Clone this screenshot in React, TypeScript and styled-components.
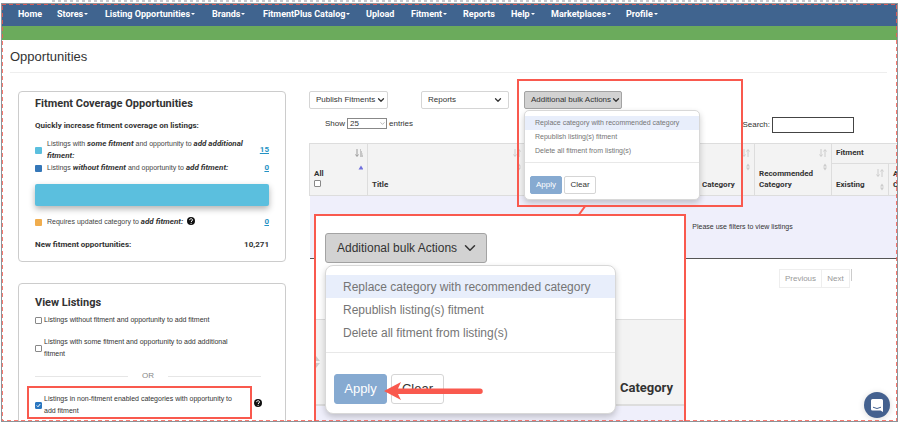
import React from "react";
import styled, { createGlobalStyle, css } from "styled-components";
import { ChevronDown } from "lucide-react";

const RED = "#f9594e";
const BOLD_FONT = `Roboto, "Liberation Sans", Arial, sans-serif`;

const Global = createGlobalStyle`
  * { box-sizing: border-box; }
  html, body { margin: 0; background: #fff; }
  body { font-family: "Liberation Sans", Arial, sans-serif; font-size: 8px; line-height: 12px; color: #333; overflow: hidden; }
  button, input, select { font: inherit; color: inherit; }
  b, th, h2 { font-family: ${BOLD_FONT}; }
`;

const Page = styled.div`
  position: relative;
  height: 100vh;
  padding: 3px 2px 2px 1px;
`;
const DotRule = styled.svg`
  position: absolute;
  top: 0;
  left: 52px;
  width: calc(100% - 94px);
  height: 2px;
`;
const Frame = styled.div`
  position: relative;
  height: 100%;
  border: 1px solid #8d9499;
  overflow: hidden;
`;
const DashedEdge = styled.svg`
  position: absolute;
  inset: 0;
  width: 100%;
  height: 100%;
  pointer-events: none;
  z-index: 5;
  opacity: 0.8;
`;

const Nav = styled.nav`
  display: flex;
  align-items: center;
  height: 22px;
  padding: 0 16px 3px;
  background: #40648f;
`;
const NavLink = styled.a<{ $w: number }>`
  flex: none;
  width: ${(p) => p.$w}px;
  color: #fff;
  font-family: ${BOLD_FONT};
  font-size: 9px;
  font-weight: bold;
  text-decoration: none;
  white-space: nowrap;
`;
const Caret = styled.span`
  display: inline-block;
  margin-left: 1px;
  vertical-align: middle;
  border-top: 2px solid #fff;
  border-left: 2px solid transparent;
  border-right: 2px solid transparent;
`;
const GreenBar = styled.div`
  height: 14px;
  background: #6bab5c;
`;
const TitleBar = styled.header`
  margin: 0 10px 0 8px;
  padding: 8px 0 6px;
  border-bottom: 1px solid #eee;
`;
const PageTitle = styled.h1`
  margin: 0;
  font-size: 13px;
  line-height: 18px;
  font-weight: normal;
`;
const Columns = styled.div`
  display: grid;
  grid-template-columns: 268px minmax(0, 1fr);
  column-gap: 23px;
  padding: 18px 0 0 16px;
`;
const Sidebar = styled.aside`
  display: flex;
  flex-direction: column;
  gap: 21px;
`;
const Card = styled.section<{ $top: number }>`
  padding: ${(p) => p.$top}px 16px 10px;
  border: 1px solid #ccc;
  border-radius: 4px;
`;
const CardTitle = styled.h2`
  margin: 0;
  font-size: 11px;
  line-height: 16px;
`;
const Lead = styled.p`
  margin: 8px 0 6px;
  font-family: ${BOLD_FONT};
  font-weight: bold;
`;
const StatRow = styled.div`
  display: grid;
  grid-template-columns: 7px minmax(0, 1fr) auto;
  column-gap: 5px;
  align-items: center;
  white-space: nowrap;
  font-size: 7px;
  color: #444;
  b { color: #333; font-size: 8px; line-height: 8px; }
`;
const Swatch = styled.span<{ $c: string }>`
  width: 7px;
  height: 7px;
  border-radius: 1px;
  background: ${(p) => p.$c};
`;
const CountLink = styled.a`
  color: #2492c4;
  font-family: ${BOLD_FONT};
  font-size: 8px;
  font-weight: bold;
`;
const CoverageBar = styled.div`
  height: 22px;
  margin: 10px 0;
  border-radius: 2px;
  background: #5bbfde;
  box-shadow: 0 3px 6px rgba(0, 0, 0, 0.3);
`;
const Total = styled.div`
  display: flex;
  justify-content: space-between;
  margin-top: 11px;
  font-family: ${BOLD_FONT};
  font-weight: bold;
`;
const HelpIcon = styled.svg`
  width: 8px;
  height: 8px;
  vertical-align: -1px;
`;
const CheckRow = styled.label`
  display: grid;
  grid-template-columns: 7px 1fr;
  column-gap: 2px;
  align-items: center;
  font-size: 7px;
  white-space: nowrap;
`;
const Tick = styled.input`
  appearance: none;
  width: 7px;
  height: 7px;
  margin: 0;
  border: 1px solid #888;
  border-radius: 1px;
  background: #fff;
  &:checked {
    border-color: #2b77c0;
    background: #2b77c0 url("data:image/svg+xml,%3Csvg xmlns='http://www.w3.org/2000/svg' viewBox='0 0 10 10'%3E%3Cpath d='M1.5 5l2.500 2.500L8.500 2' fill='none' stroke='white' stroke-width='2'/%3E%3C/svg%3E") center / 100%;
  }
`;
const Options = styled.div`
  display: flex;
  flex-direction: column;
  gap: 10px;
  margin-top: 3px;
`;
const OrRule = styled.div`
  display: flex;
  align-items: center;
  gap: 14px;
  margin-right: 8px;
  color: #888;
  &::before, &::after { content: ""; flex: 1; height: 1px; background: #e6e6e6; }
`;
const MarkedRow = styled.div`
  display: flex;
  align-items: center;
  gap: 2px;
  margin: -6px 0 0 -8px;
`;
const MarkedBox = styled.div`
  width: 225px;
  padding: 5px 6px 0;
  border: 2px solid ${RED};
`;

const Main = styled.main`
  min-width: 0;
`;
const Toolbar = styled.div`
  display: flex;
`;
const DropButton = styled.button<{ $w: number; $gap?: number; $end?: number; $active?: boolean; $large?: boolean }>`
  display: flex;
  align-items: center;
  justify-content: space-between;
  width: ${(p) => p.$w}px;
  height: 18px;
  margin-right: ${(p) => p.$gap ?? 0}px;
  padding: 0 ${(p) => p.$end ?? 1}px 0 6px;
  border: 1px solid #d5d5d5;
  border-radius: 2px;
  background: #fff;
  white-space: nowrap;
  svg { flex: none; }
  ${(p) => p.$active && css`
    border-color: #a3a3a3;
    background: #d2d2d2;
  `}
  ${(p) => p.$large && css`
    height: 30px;
    padding: 0 7px 0 11px;
    font-size: 12px;
    border-radius: 3px;
  `}
`;
const BulkActions = styled.div`
  position: relative;
`;
const Menu = styled.div<{ $large?: boolean }>`
  position: absolute;
  z-index: 1;
  top: 100%;
  left: 0;
  width: ${(p) => (p.$large ? 291 : 176)}px;
  margin-top: ${(p) => (p.$large ? 2 : 1)}px;
  padding: ${(p) => (p.$large ? "9px 0" : "5px 0")};
  border: 1px solid #d8d8d8;
  border-radius: ${(p) => (p.$large ? 8 : 5)}px;
  background: #fff;
  box-shadow: 0 3px 6px rgba(0, 0, 0, 0.2);
  font-size: ${(p) => (p.$large ? 12 : 7)}px;
`;
const MenuItem = styled.button<{ $large?: boolean; $on?: boolean }>`
  display: block;
  width: 100%;
  height: ${(p) => (p.$large ? 23 : 14)}px;
  padding: 0 ${(p) => (p.$large ? 17 : 10)}px;
  border: 0;
  background: ${(p) => (p.$on ? "#e8eefb" : "transparent")};
  color: #757575;
  text-align: left;
  white-space: nowrap;
`;
const MenuFooter = styled.div<{ $large?: boolean }>`
  display: flex;
  gap: ${(p) => (p.$large ? 4 : 2)}px;
  margin-top: ${(p) => (p.$large ? 8 : 4)}px;
  padding: ${(p) => (p.$large ? "21px 8px 0" : "13px 5px 0")};
  border-top: 1px solid #e8e8e8;
`;
const MenuButton = styled.button<{ $large?: boolean; $primary?: boolean }>`
  width: ${(p) => (p.$large ? 53 : 32)}px;
  height: ${(p) => (p.$large ? 30 : 18)}px;
  padding: 0;
  border: 1px solid ${(p) => (p.$primary ? "#86aad1" : "#d5d5d5")};
  border-radius: ${(p) => (p.$large ? 3 : 2)}px;
  background: ${(p) => (p.$primary ? "#86aad1" : "#fff")};
  color: ${(p) => (p.$primary ? "#fff" : "#333")};
  font-size: ${(p) => (p.$large ? 13 : 8)}px;
`;
const TableControls = styled.div`
  display: flex;
  align-items: center;
  justify-content: space-between;
  margin: 8px 43px 10px 16px;
`;
const LengthLabel = styled.label`
  display: flex;
  align-items: center;
  gap: 2px;
  padding-bottom: 3px;
`;
const SelectWrap = styled.span`
  position: relative;
  display: flex;
  svg { position: absolute; right: 1px; top: 2px; color: #888; pointer-events: none; }
`;
const LengthSelect = styled.select`
  appearance: none;
  width: 40px;
  height: 11px;
  padding: 0 2px;
  border: 1px solid #888;
  border-radius: 0;
  background: #fff;
  line-height: 9px;
`;
const SearchLabel = styled.label`
  display: flex;
  align-items: center;
  gap: 2px;
`;
const SearchInput = styled.input`
  width: 82px;
  height: 16px;
  border: 1px solid #444;
`;
const Listings = styled.table`
  width: 866px;
  table-layout: fixed;
  border-collapse: collapse;
  border-bottom: 1px solid #555;
`;
const Th = styled.th`
  position: relative;
  height: 20px;
  padding: 2px 4px 5px;
  border: 1px solid #ddd;
  background: #f3f3f3;
  line-height: 11px;
  text-align: left;
  vertical-align: bottom;
`;
const HeadRow = styled.tr<{ $h: number }>`
  height: ${(p) => p.$h}px;
`;
const SortMark = styled.svg`
  position: absolute;
  top: 5px;
  right: 4px;
  width: 8px;
  height: 22px;
`;
const Empty = styled.td`
  height: 63px;
  padding: 0;
  background: #efeffb;
  color: #333;
  font-size: 7px;
  text-align: center;
`;
const Pager = styled.div`
  display: flex;
  justify-content: flex-end;
  margin: 10px 45px 0 0;
`;
const PageButton = styled.button<{ $w: number }>`
  width: ${(p) => p.$w}px;
  height: 19px;
  margin-left: -1px;
  padding: 0;
  border: 1px solid #eee;
  background: #fff;
  color: #999;
`;
const PagerEdge = styled.span`
  width: 1px;
  height: 12px;
  margin-left: 1px;
  background: #ccc;
`;

const Callout = styled.div`
  position: absolute;
  z-index: 2;
  left: 515px;
  top: 75px;
  width: 226px;
  height: 128px;
  border: 2px solid ${RED};
  pointer-events: none;
`;
const Connector = styled.svg`
  position: absolute;
  z-index: 2;
  left: 570px;
  top: 201px;
  width: 20px;
  height: 12px;
`;
const Inset = styled.div`
  position: absolute;
  z-index: 3;
  left: 312px;
  top: 210px;
  bottom: 0;
  width: 372px;
  padding: 17px 0 0 9px;
  border: 2px solid ${RED};
  border-bottom: 0;
  background: #fff;
  overflow: hidden;
`;
const InsetHead = styled.div`
  position: absolute;
  left: 0;
  right: 0;
  top: 103px;
  bottom: 0;
  background: #efeffb;
`;
const InsetHeadCell = styled.div`
  height: 87px;
  padding: 59px 11px 0 0;
  border: solid #ddd;
  border-width: 1px 0 2px;
  background: #f3f3f3;
  font-family: ${BOLD_FONT};
  font-size: 13px;
  line-height: 18px;
  font-weight: bold;
  text-align: right;
`;
const InsetSort = styled.svg`
  position: absolute;
  left: 0;
  top: 36px;
  width: 5px;
  height: 14px;
`;
const Arrow = styled.svg`
  position: absolute;
  z-index: 2;
  left: 67px;
  top: 164px;
  width: 102px;
  height: 22px;
`;
const Chat = styled.button`
  position: absolute;
  z-index: 4;
  right: 7px;
  bottom: 3px;
  display: grid;
  place-items: center;
  width: 26px;
  height: 26px;
  padding: 0;
  border: 0;
  border-radius: 50%;
  background: #44618f;
  box-shadow: 0 1px 6px rgba(0, 0, 0, 0.15);
`;

const NAV: [string, number, boolean][] = [
  ["Home", 39, false], ["Stores", 48, true], ["Listing Opportunities", 107, true], ["Brands", 51, true],
  ["FitmentPlus Catalog", 103, true], ["Upload", 45, false], ["Fitment", 52, true], ["Reports", 48, false],
  ["Help", 40, true], ["Marketplaces", 75, true], ["Profile", 40, true],
];

const Help = () => (
  <HelpIcon viewBox="0 0 16 16" aria-label="Help">
    <circle cx="8" cy="8" r="8" fill="#111" />
    <path d="M5.200 6.200c0-3.700 5.800-3.700 5.800-.2 0 2-2.800 2-2.800 4" fill="none" stroke="#fff" strokeWidth="2" />
    <circle cx="8.200" cy="12.500" r="1.200" fill="#fff" />
  </HelpIcon>
);

const Sort = ({ first = false }: { first?: boolean }) => (
  <SortMark viewBox="0 0 8 22" fill="none" stroke={first ? "#999" : "#ccc"}>
    <path d="M2 0v7M0.500 5.500L2 7.500l1.500-2" />
    {first ? <path d="M5 1h1M5 3h2M5 5h2.500M5 7h3" /> : <path d="M6 8V1M4.500 2.500L6 .5l1.500 2" />}
    {first ? (
      <path d="M3.500 20.500h5l-2.500-4z" fill="#7070dd" stroke="none" />
    ) : (
      <path d="M4 17.500h4l-2-3zM4 18.500h4l-2 3z" fill="#ccc" stroke="none" />
    )}
  </SortMark>
);

const BulkMenu = ({ large = false }: { large?: boolean }) => (
  <BulkActions>
    <DropButton $w={large ? 162 : 98} $active $large={large}>
      Additional bulk Actions
      <ChevronDown size={large ? 18 : 10} strokeWidth={large ? 2 : 3} />
    </DropButton>
    <Menu $large={large}>
      <MenuItem $large={large} $on>Replace category with recommended category</MenuItem>
      <MenuItem $large={large}>Republish listing(s) fitment</MenuItem>
      <MenuItem $large={large}>Delete all fitment from listing(s)</MenuItem>
      <MenuFooter $large={large}>
        <MenuButton $large={large} $primary>Apply</MenuButton>
        <MenuButton $large={large}>Clear</MenuButton>
      </MenuFooter>
    </Menu>
  </BulkActions>
);

export default function App() {
  return (
    <Page>
      <Global />
      <DotRule><line x1="0" y1="1" x2="100%" y2="1" stroke="#c9c9cf" strokeWidth="2" strokeDasharray="3 3" /></DotRule>
      <Frame>
        <Nav>
          {NAV.map(([label, w, menu]) => (
            <NavLink key={label} href="#" $w={w}>{label}{menu && <Caret />}</NavLink>
          ))}
        </Nav>
        <GreenBar />
        <TitleBar><PageTitle>Opportunities</PageTitle></TitleBar>
        <Columns>
          <Sidebar>
            <Card $top={4}>
              <CardTitle>Fitment Coverage Opportunities</CardTitle>
              <Lead>Quickly increase fitment coverage on listings:</Lead>
              <StatRow>
                <Swatch $c="#5bbfde" />
                <span>Listings with <b><i>some fitment</i></b> and opportunity to <b><i>add additional<br />fitment:</i></b></span>
                <CountLink href="#">15</CountLink>
              </StatRow>
              <StatRow>
                <Swatch $c="#3577b8" />
                <span>Listings <b><i>without fitment</i></b> and opportunity to <b><i>add fitment:</i></b></span>
                <CountLink href="#">0</CountLink>
              </StatRow>
              <CoverageBar />
              <StatRow>
                <Swatch $c="#f0ad4e" />
                <span>Requires updated category to <b><i>add fitment:</i></b>&nbsp; <Help /></span>
                <CountLink href="#">0</CountLink>
              </StatRow>
              <Total><span>New fitment opportunities:</span><span>10,271</span></Total>
            </Card>
            <Card $top={11}>
              <CardTitle>View Listings</CardTitle>
              <Options>
                <CheckRow><Tick type="checkbox" /><span>Listings without fitment and opportunity to add fitment</span></CheckRow>
                <CheckRow><Tick type="checkbox" /><span>Listings with some fitment and opportunity to add additional<br />fitment</span></CheckRow>
                <OrRule>OR</OrRule>
                <MarkedRow>
                  <MarkedBox>
                    <CheckRow><Tick type="checkbox" defaultChecked /><span>Listings in non-fitment enabled categories with opportunity to<br />add fitment</span></CheckRow>
                  </MarkedBox>
                  <Help />
                </MarkedRow>
              </Options>
            </Card>
          </Sidebar>
          <Main>
            <Toolbar>
              <DropButton $w={79} $gap={33}>Publish Fitments<ChevronDown size={10} strokeWidth={3} /></DropButton>
              <DropButton $w={88} $gap={15} $end={5}>Reports<ChevronDown size={10} strokeWidth={3} /></DropButton>
              <BulkMenu />
            </Toolbar>
            <TableControls>
              <LengthLabel>
                Show
                <SelectWrap><LengthSelect defaultValue="25"><option>25</option></LengthSelect><ChevronDown size={7} /></SelectWrap>
                entries
              </LengthLabel>
              <SearchLabel>Search:<SearchInput type="search" /></SearchLabel>
            </TableControls>
            <Listings>
              <colgroup>
                <col width="58" /><col width="158" /><col width="172" /><col width="57" />
                <col width="77" /><col width="57" /><col width="287" />
              </colgroup>
              <thead>
                <HeadRow $h={20}>
                  <Th rowSpan={2}>
                    <label>All<br /><Tick type="checkbox" /></label>
                    <Sort first />
                  </Th>
                  <Th rowSpan={2}>Title<Sort /></Th>
                  <Th rowSpan={2} />
                  <Th rowSpan={2}>Category<Sort /></Th>
                  <Th rowSpan={2}>Recommended Category<Sort /></Th>
                  <Th colSpan={2}>Fitment</Th>
                </HeadRow>
                <HeadRow $h={32}>
                  <Th>Existing<Sort /></Th>
                  <Th>Add<br />Coverage</Th>
                </HeadRow>
              </thead>
              <tbody><tr><Empty colSpan={7}>Please use filters to view listings</Empty></tr></tbody>
            </Listings>
            <Pager>
              <PageButton $w={43}>Previous</PageButton>
              <PageButton $w={29}>Next</PageButton>
              <PagerEdge />
            </Pager>
          </Main>
        </Columns>
        <Callout />
        <Connector viewBox="0 0 20 12"><path d="M14 0L6 11" stroke={RED} strokeWidth="2" /></Connector>
        <Inset>
          <InsetHead>
            <InsetHeadCell>Category</InsetHeadCell>
            <InsetSort viewBox="0 0 5 14"><path d="M0 1l4 5H0zM0 8h4l-4 5z" fill="#ccc" /></InsetSort>
          </InsetHead>
          <BulkMenu large />
          <Arrow viewBox="0 0 102 22">
            <path d="M1 11L18 2l-3 6.500h82a2.500 2.500 0 0 1 0 5.500H15l3 6z" fill={RED} />
          </Arrow>
        </Inset>
        <Chat aria-label="Open chat">
          <svg width="12" height="13" viewBox="0 0 12 13">
            <path d="M1.500 0h9A1.500 1.500 0 0 1 12 1.500V13l-2.500-1.500h-8A1.500 1.500 0 0 1 0 10V1.500A1.500 1.500 0 0 1 1.500 0z" fill="#fff" />
            <path d="M2 8.200q4 2.600 8 0" fill="none" stroke="#44618f" />
          </svg>
        </Chat>
        <DashedEdge>
          <rect x="0" y="0" width="100%" height="100%" fill="none" stroke={RED} strokeWidth="2" strokeDasharray="4 3" />
        </DashedEdge>
      </Frame>
    </Page>
  );
}
